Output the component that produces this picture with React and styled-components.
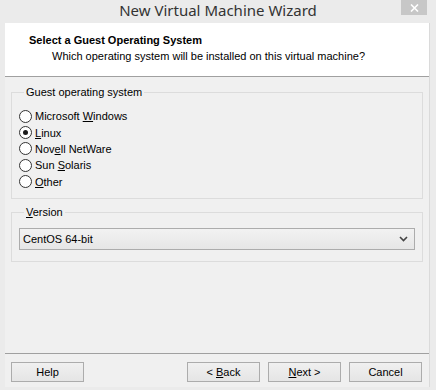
import React from "react";
import styled, { createGlobalStyle } from "styled-components";

const Global = createGlobalStyle`
  html, body { margin: 0; padding: 0; background: #ebebeb; }
  body { font-family: "Liberation Sans", Arial, sans-serif; font-size: 11px; color: #000; }
`;

const Window = styled.div`
  width: 436px;
  height: 390px;
  background: #ebebeb;
  display: flex;
  flex-direction: column;
  box-sizing: border-box;
`;

const TitleBar = styled.div`
  height: 23px;
  display: flex;
  align-items: flex-start;
  justify-content: center;
  position: relative;
`;

const TitleText = styled.div`
  font-family: "Noto Sans", sans-serif;
  font-size: 15px;
  color: #333;
  line-height: 20px;
`;

const CloseBtn = styled.div`
  position: absolute;
  top: 0;
  right: 9px;
  width: 26px;
  height: 15px;
  background: #c7c7c7;
  color: #fff;
  display: flex;
  align-items: center;
  justify-content: center;
`;

const Client = styled.div`
  flex: 1;
  margin: 0 6px 3px 5px;
  background: #f0f0f0;
  display: flex;
  flex-direction: column;
  border-right: 1px solid #dadada;
`;

const Header = styled.div`
  background: #fff;
  border-bottom: 1px solid #a0a0a0;
  padding: 10px 0 0 24px;
  box-sizing: border-box;
  height: 54px;
`;

const HeaderTitle = styled.div`
  font-weight: bold;
  line-height: 15px;
`;

const HeaderSub = styled.div`
  padding-left: 23px;
  line-height: 16px;
`;

const Body = styled.div`
  flex: 1;
  padding: 8px 6px 0 6px;
  display: flex;
  flex-direction: column;
  gap: 6px;
`;

const Group = styled.fieldset`
  margin: 0;
  border: 1px solid #dcdcdc;
  padding: ${(p) => p.$pad};
  min-width: 0;
  height: ${(p) => p.$h}px;
  box-sizing: border-box;
  display: flex;
  flex-direction: column;
`;

const Legend = styled.legend`
  padding: 0 2px;
  margin-left: 5px;
  line-height: 14px;
`;

const U = styled.span`
  text-decoration: underline;
`;

const RadioRow = styled.label`
  display: flex;
  align-items: center;
  height: 16.4px;
  gap: 3px;
`;

const Circle = styled.span`
  width: 11px;
  height: 11px;
  border-radius: 50%;
  border: 1px solid #333;
  background: #fff;
  display: flex;
  align-items: center;
  justify-content: center;
  flex: none;
`;

const Dot = styled.span`
  width: 5px;
  height: 5px;
  border-radius: 50%;
  background: #1a1a1a;
`;

const Select = styled.div`
  height: 22px;
  box-sizing: border-box;
  border: 1px solid #acacac;
  background: linear-gradient(#f2f2f2, #e6e6e6);
  display: flex;
  align-items: center;
  justify-content: space-between;
  padding: 0 6px 0 3px;
`;

const Footer = styled.div`
  border-top: 1px solid #a0a0a0;
  height: 34px;
  padding: 8px 7px 0 6px;
  box-sizing: border-box;
  display: flex;
  align-items: flex-start;
`;

const Button = styled.button`
  width: 73px;
  height: 20px;
  border: 1px solid #acacac;
  background: linear-gradient(#f0f0f0, #e5e5e5);
  font: inherit;
  color: #000;
  padding: 0;
  line-height: 16px;
  margin-left: ${(p) => p.$ml || 0}px;
`;

const Spacer = styled.div`
  flex: 1;
`;

const Radio = ({ checked, children }) => (
  <RadioRow>
    <Circle>{checked && <Dot />}</Circle>
    <span>{children}</span>
  </RadioRow>
);

export default function App() {
  return (
    <>
      <Global />
      <Window>
        <TitleBar>
          <TitleText>New Virtual Machine Wizard</TitleText>
          <CloseBtn>
            <svg width="9" height="8" viewBox="0 0 9 8">
              <path d="M1 0.5 L8 7.5 M8 0.5 L1 7.5" stroke="#fff" strokeWidth="1.6" />
            </svg>
          </CloseBtn>
        </TitleBar>
        <Client>
          <Header>
            <HeaderTitle>Select a Guest Operating System</HeaderTitle>
            <HeaderSub>Which operating system will be installed on this virtual machine?</HeaderSub>
          </Header>
          <Body>
            <Group $h={114} $pad="9px 7px 0 7px">
              <Legend>Guest operating system</Legend>
              <Radio>Microsoft <U>W</U>indows</Radio>
              <Radio checked><U>L</U>inux</Radio>
              <Radio>Nov<U>e</U>ll NetWare</Radio>
              <Radio>Sun <U>S</U>olaris</Radio>
              <Radio><U>O</U>ther</Radio>
            </Group>
            <Group $h={57} $pad="9px 7px 0 7px">
              <Legend><U>V</U>ersion</Legend>
              <Select>
                <span>CentOS 64-bit</span>
                <svg width="9" height="6" viewBox="0 0 9 6">
                  <path d="M1 1 L4.5 4.5 L8 1" stroke="#444" strokeWidth="1.6" fill="none" />
                </svg>
              </Select>
            </Group>
            <Spacer />
          </Body>
          <Footer>
            <Button>Help</Button>
            <Spacer />
            <Button>&lt; <U>B</U>ack</Button>
            <Button $ml={8}><U>N</U>ext &gt;</Button>
            <Button $ml={8}>Cancel</Button>
          </Footer>
        </Client>
      </Window>
    </>
  );
}
